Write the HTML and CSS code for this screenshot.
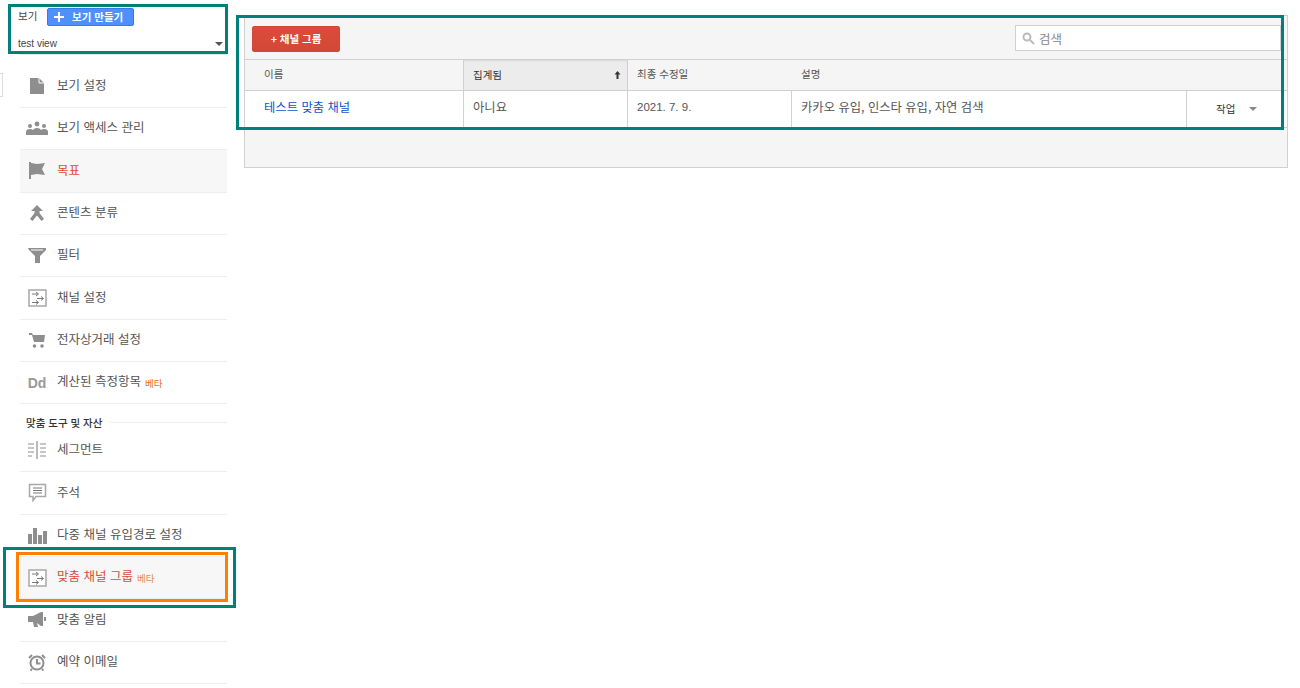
FILE: index.html
```html
<!DOCTYPE html>
<html lang="ko">
<head>
<meta charset="utf-8">
<title>맞춤 채널 그룹</title>
<link rel="stylesheet" href="styles.css">
</head>
<body>
<div class="page">
  <aside class="sidebar">
    <div class="view-head">
      <div class="view-top"><span class="view-label">보기</span>
        <button class="create"><svg class="plus" viewBox="0 0 12 12"><path d="M5 1h2v4h4v2H7v4H5V7H1V5h4z"/></svg><span>보기 만들기</span></button>
      </div>
      <div class="view-select"><span>test view</span><i class="caret"></i></div>
    </div>
    <nav class="nav">
      <a class="row"><span class="ic"><svg width="16" height="18" viewBox="0 0 16 18"><path d="M1 1h9l5 5v11H1z"/><path class="cut" d="M10 1v5h5"/></svg></span><span class="t">보기 설정</span></a>
      <a class="row"><span class="ic"><svg width="22" height="15" viewBox="0 0 22 15"><circle cx="4" cy="5" r="2"/><circle cx="11" cy="3" r="2.4"/><circle cx="18" cy="5" r="2"/><path d="M0 14v-3q0-3 4-3 2 0 3 1 1-2 4-2t4 2q1-1 3-1 4 0 4 3v3z"/></svg></span><span class="t">보기 액세스 관리</span></a>
      <a class="row on"><span class="ic"><svg width="18" height="19" viewBox="0 0 18 19"><path d="M1 1h2v17H1z"/><path d="M3 2l6 1 8-1-3 6 3 6-8-1-6 1z"/></svg></span><span class="t red">목표</span></a>
      <a class="row"><span class="ic"><svg width="16" height="17" viewBox="0 0 16 17"><path d="M8 0l6 6h-3.500v2L15 14l-2.500 2L8 10.500 3.500 16 1 14l4.500-6V6H2z"/></svg></span><span class="t">콘텐츠 분류</span></a>
      <a class="row"><span class="ic"><svg width="18" height="17" viewBox="0 0 18 17"><path d="M0 1h18v2l-6 6v7H7V9L1 3z"/><path class="cut" d="M3 3h12"/></svg></span><span class="t">필터</span></a>
      <a class="row"><span class="ic"><svg width="19" height="18" viewBox="0 0 19 18"><use href="#chan"/></svg></span><span class="t">채널 설정</span></a>
      <a class="row"><span class="ic"><svg width="16" height="15" viewBox="0 0 16 15"><path d="M0 0h3l1 2h12l-1 7H5L3 2H0z"/><circle cx="5.5" cy="13" r="1.8"/><circle cx="13" cy="13" r="1.8"/></svg></span><span class="t">전자상거래 설정</span></a>
      <a class="row"><span class="ic dd">Dd</span><span class="t">계산된 측정항목</span><em>베타</em></a>
      <div class="section"><span>맞춤 도구 및 자산</span></div>
      <a class="row first"><span class="ic"><svg class="lines" width="20" height="18" viewBox="0 0 20 18"><path d="M10 0v18M1 3h6M1 7h6M1 11h6M1 15h4M13 3h6M13 7h6M13 11h6M13 15h6"/></svg></span><span class="t">세그먼트</span></a>
      <a class="row"><span class="ic"><svg width="19" height="19" viewBox="0 0 19 19"><path class="outline" d="M1.5 1.5h16v12H8l-3 4v-4H1.5z"/><path class="inner" d="M5 5h9M5 7.5h9M5 10h9"/></svg></span><span class="t">주석</span></a>
      <a class="row"><span class="ic"><svg width="19" height="17" viewBox="0 0 19 17"><path d="M0 7h4v10H0zM5 1h4v16H5zM10 8h4v9h-4zM15 4h4v13h-4z"/></svg></span><span class="t">다중 채널 유입경로 설정</span></a>
      <a class="row on"><span class="ic"><svg width="19" height="18" viewBox="0 0 19 18"><use href="#chan"/></svg></span><span class="t red">맞춤 채널 그룹</span><em class="pale">베타</em></a>
      <a class="row"><span class="ic"><svg width="18" height="15" viewBox="0 0 18 15"><path d="M0 4h5l8-4h2v14h-2L9 11l1 4H6L5 10H0z"/><path d="M16 5h2v4h-2z"/></svg></span><span class="t">맞춤 알림</span></a>
      <a class="row"><span class="ic"><svg class="clock" width="18" height="17" viewBox="0 0 18 17"><circle cx="9" cy="9" r="6.5"/><path d="M9 5v4.500h3.500M1 4l3-3M17 4l-3-3M4 15l-1.500 1.500M14 15l1.500 1.500"/></svg></span><span class="t">예약 이메일</span></a>
    </nav>
  </aside>

  <main class="main">
    <section class="panel">
      <div class="toolbar">
        <button class="add">+ 채널 그룹</button>
        <label class="search"><svg width="13" height="13" viewBox="0 0 13 13"><circle cx="5" cy="5" r="3.500"/><path d="M8 8l4 4"/></svg><span>검색</span></label>
      </div>
      <div class="grid head">
        <div class="cell">이름</div>
        <div class="cell sorted">집계됨<svg class="arrow" width="7" height="8" viewBox="0 0 7 8"><path d="M3.500 0L6.500 3.500H4.500V8h-2V3.500H.5z"/></svg></div>
        <div class="cell">최종 수정일</div>
        <div class="cell desc">설명</div>
        <div class="cell"></div>
      </div>
      <div class="grid body">
        <div class="cell"><a class="link">테스트 맞춤 채널</a></div>
        <div class="cell">아니요</div>
        <div class="cell date">2021. 7. 9.</div>
        <div class="cell">카카오 유입, 인스타 유입, 자연 검색</div>
        <div class="cell action"><span>작업</span><i class="caret small"></i></div>
      </div>
      <div class="foot"></div>
    </section>
  </main>

  <div class="stub"></div>
  <div class="mark m-view"></div>
  <div class="mark m-table"></div>
  <div class="mark m-row"></div>
  <div class="mark orange"></div>
</div>
<svg class="defs" width="0" height="0"><defs>
  <g id="chan"><rect class="outline" x="1" y="1" width="17" height="16"/><path class="inner" d="M4 5h6M8 3l2.500 2L8 7M9 9.500h6M13 7.500l2.500 2-2.500 2M4 13.500h6M8 11.500l2.500 2-2.500 2"/></g>
</defs></svg>
</body>
</html>
```
FILE: styles.css
```css
* { box-sizing: border-box; }
html, body { margin: 0; height: 100%; background: #fff; overflow: hidden; }
body { font-family: "Noto Sans CJK KR", "Liberation Sans", sans-serif; font-size: 12.5px; color: #444; }
.page { position: relative; display: flex; width: 1300px; height: 688px; }
.defs { position: absolute; }

.sidebar { width: 207px; margin-left: 20px; flex: none; display: flex; flex-direction: column; }
.view-head { margin-left: -2px; height: 55px; padding-top: 8px; border-bottom: 1px solid #e8e8e8; }
.view-top { display: flex; align-items: flex-start; height: 18px; }
.view-label { width: 29px; font-size: 10.500px; line-height: 16px; color: #444; }
.create { display: flex; align-items: center; width: 87px; height: 18px; padding: 0 0 0 5px; border: 1px solid #3b78e7; border-radius: 2px; background: #4d90fe; color: #fff; font: bold 10.500px/16px "Noto Sans CJK KR", sans-serif; }
.plus { width: 12px; height: 12px; fill: #fff; margin-right: 7px; }
.view-select { display: flex; justify-content: space-between; align-items: center; margin-top: 10px; padding-right: 4px; font: 10px/16px "Liberation Sans", sans-serif; color: #444; }
.caret { display: block; width: 0; height: 0; border: 4px solid transparent; border-top: 4px solid #555; border-bottom: 0; }

.nav { margin-top: 10.6px; display: flex; flex-direction: column; }
.row { display: flex; align-items: center; height: 42.33px; border-bottom: 1px solid #eee; color: #555; white-space: nowrap; }
.row .t { position: relative; top: -1.6px; }
.row .red { color: #dd4b39; }
.row.on { background: #f7f7f7; }
.row em { margin-left: 4px; font-style: normal; font-size: 9.500px; color: #e8700f; }
.row em.pale { color: #e98a45; }
.row.first { height: 43px; }
.ic { flex: none; width: 37px; padding-right: 3px; display: flex; justify-content: center; align-items: center; color: #8e8e8e; }
.ic svg { fill: #8e8e8e; }
.ic .cut { fill: none; stroke: #fff; stroke-width: 1; }
.outline { fill: #fff; stroke: #a8a8a8; stroke-width: 1.500; }
.inner { fill: none; stroke: #777; stroke-width: 1; }
.ic .lines { fill: none; stroke: #8e8e8e; stroke-width: 1.200; }
.ic .clock { fill: none; stroke: #8e8e8e; stroke-width: 2; }
.dd { font: bold 14px/18px "Liberation Sans", sans-serif; color: #999; }
.section { display: flex; align-items: center; height: 25px; margin-left: 6px; padding-top: 12px; font-size: 10.500px; font-weight: 500; color: #333; }
.section::after { content: ""; flex: 1; margin-left: 8px; height: 1px; background: #eee; }

.main { flex: 1; padding: 15px 12px 0 17px; min-width: 0; }
.panel { border: 1px solid #d0d0d0; background: #f5f5f5; height: 153px; }
.toolbar { display: flex; justify-content: space-between; align-items: flex-start; height: 43px; padding: 9px 6px 0 7px; }
.add { width: 88px; height: 26px; margin-top: 1px; padding: 0; border: 1px solid #d14836; border-radius: 2px; background: linear-gradient(#dd4b39, #d14836); color: #fff; font: bold 10.500px/24px "Noto Sans CJK KR", sans-serif; }
.search { display: flex; align-items: center; width: 266px; height: 26px; padding-left: 6px; border: 1px solid #d0d0d0; background: #fff; color: #888; font-size: 12.500px; }
.search svg { margin-right: 4px; fill: none; stroke: #bbb; stroke-width: 2; }
.grid { display: grid; grid-template-columns: 218px 164px 164px 395px 1fr; }
.head { height: 31px; border-top: 1px solid #d0d0d0; font-size: 10.500px; }
.head .cell { padding-left: 9px; line-height: 28px; color: #555; }
.head .cell:first-child { padding-left: 19px; }
.head .cell.desc { padding-left: 10px; }
.head .sorted { display: flex; justify-content: space-between; align-items: center; padding-right: 6px; background: #ececec; border-left: 1px solid #d0d0d0; box-shadow: inset 0 2px 2px -1px #d8d8d8; color: #333; }
.head .sorted + .cell { border-left: 1px solid #d0d0d0; }
.arrow { fill: #333; }
.body { height: 38px; border-top: 1px solid #d0d0d0; border-bottom: 1px solid #d0d0d0; background: #fff; font-size: 12.3px; }
.body .cell { padding-left: 9px; line-height: 32px; color: #555; border-left: 1px solid #d0d0d0; }
.body .cell:first-child { padding-left: 19px; border-left: 0; }
.body .date { font-family: "Liberation Sans", sans-serif; font-size: 11.500px; }
.link { color: #15c; }
.action { display: flex; align-items: center; font-size: 10.500px; padding-left: 29px !important; color: #333 !important; }
.small { margin-left: 14px; border-width: 4px; border-top-color: #888; border-bottom: 0; }
.foot { height: 38px; }

.stub { position: absolute; left: -1px; top: 73px; width: 4px; height: 24px; border: 1px solid #ddd; }
.mark { position: absolute; border: 3px solid #00807a; pointer-events: none; }
.m-view { left: 8px; top: 4px; width: 220px; height: 50px; }
.m-table { left: 236px; top: 15px; width: 1048px; height: 115px; }
.m-row { left: 3px; top: 547px; width: 233px; height: 61px; }
.orange { left: 16px; top: 552px; width: 212px; height: 50px; border-color: #ff8000; }
```
